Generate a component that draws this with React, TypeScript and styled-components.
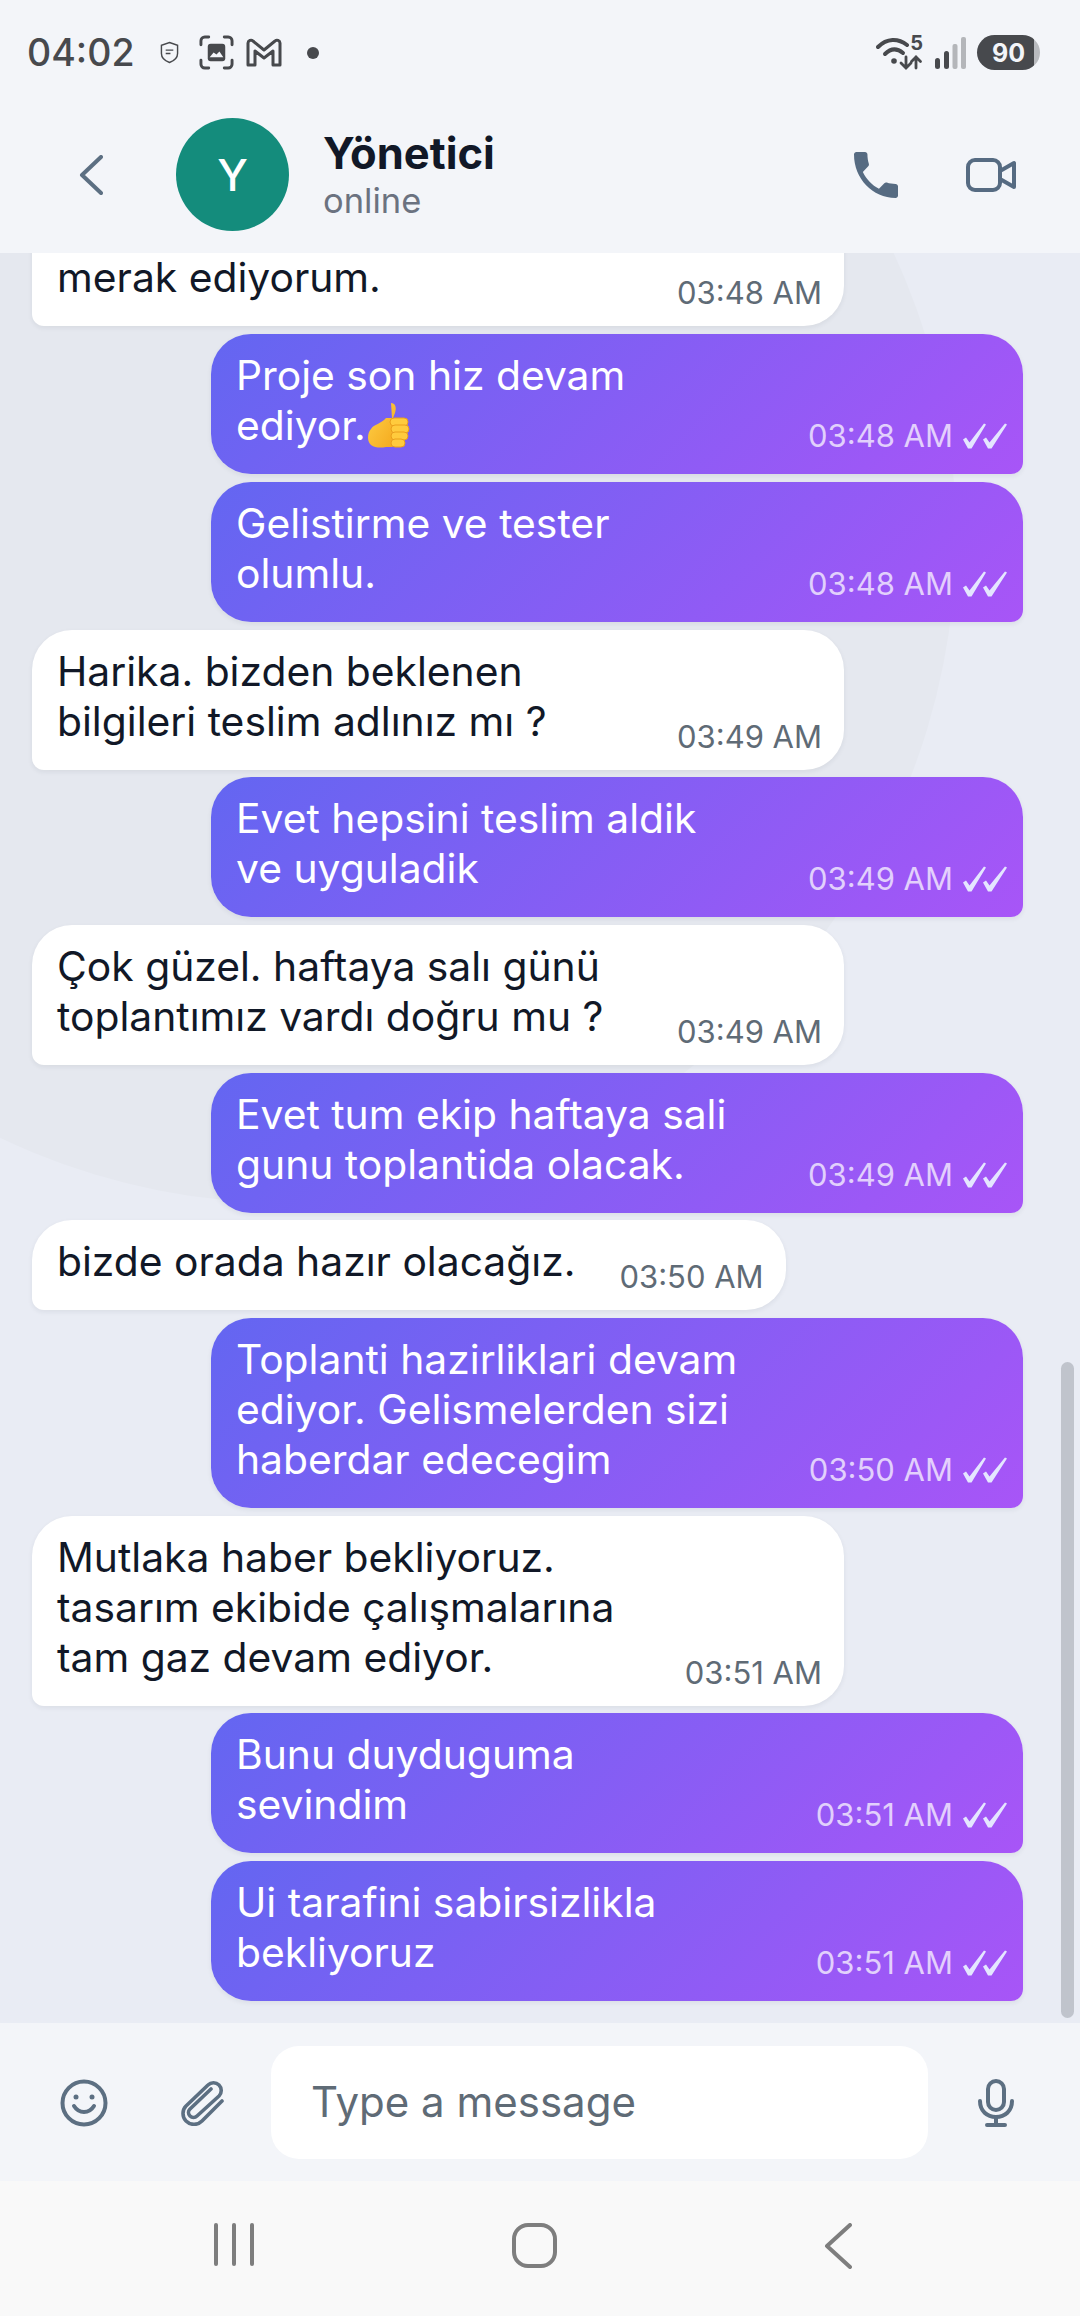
import React from 'react';
import styled, { createGlobalStyle } from 'styled-components';

const GlobalStyle = createGlobalStyle`
    html, body {
        margin: 0;
        padding: 0;
        background: #f3f5f9;
    }
    * {
        box-sizing: border-box;
    }
`;

const Screen = styled.div`
    width: 1080px;
    height: 2316px;
    display: flex;
    flex-direction: column;
    overflow: hidden;
    font-family: Inter, "Noto Sans", sans-serif;
    background: #f3f5f9;
`;

const TopArea = styled.header`
    flex: none;
    height: 253px;
    background: #f3f5f9;
    display: flex;
    flex-direction: column;
`;

const StatusBar = styled.div`
    height: 105px;
    padding: 0 40px 0 27px;
    display: flex;
    align-items: center;
    justify-content: space-between;
    color: #47494d;
`;

const StatusGroup = styled.div`
    display: flex;
    align-items: center;
`;

const Clock = styled.span`
    font-size: 37.5px;
    font-weight: 500;
    margin-right: 25px;
`;

const Header = styled.div`
    flex: 1;
    display: flex;
    align-items: flex-start;
    padding: 13px 64px 0 79px;
`;

const BackButton = styled.div`
    width: 97px;
    height: 113px;
    display: flex;
    align-items: center;
`;

const Avatar = styled.div`
    width: 113px;
    height: 113px;
    border-radius: 50%;
    background: #148c7c;
    color: #fff;
    font-size: 44px;
    font-weight: 500;
    display: flex;
    align-items: center;
    justify-content: center;
`;

const Contact = styled.div`
    flex: 1;
    margin-left: 34px;
    padding-top: 8px;
    display: flex;
    flex-direction: column;
`;

const Name = styled.div`
    font-size: 43.5px;
    font-weight: 700;
    line-height: 54px;
    color: #111827;
`;

const Presence = styled.div`
    font-size: 34.5px;
    line-height: 41px;
    color: #6b7280;
`;

const HeaderActions = styled.div`
    height: 113px;
    display: flex;
    align-items: center;
    gap: 68px;
`;

const Chat = styled.main`
    flex: 1;
    min-height: 0;
    position: relative;
    overflow: hidden;
    background: #e9ecf4;
    display: flex;
    flex-direction: column;
    justify-content: flex-end;
    gap: 7.7px;
    padding: 0 57px 22px 32px;

    &::before {
        content: '';
        position: absolute;
        left: -380px;
        top: -386px;
        width: 1336px;
        height: 1336px;
        border-radius: 50%;
        background: #e5e8ef;
    }
`;

const ScrollThumb = styled.div`
    position: absolute;
    right: 6px;
    bottom: 5px;
    width: 13px;
    height: 656px;
    border-radius: 7px;
    background: #c0c4cc;
`;

const Bubble = styled.div<{ $mine?: boolean; $fit?: boolean }>`
    position: relative;
    flex: none;
    width: ${p => (p.$fit ? 'fit-content' : '812px')};
    align-self: ${p => (p.$mine ? 'flex-end' : 'flex-start')};
    padding: ${p => (p.$mine ? '16px 16px 24px 25px' : '16px 22px 24px 25px')};
    display: flex;
    justify-content: space-between;
    gap: 44px;
    color: ${p => (p.$mine ? '#fff' : '#111827')};
    background: ${p => (p.$mine ? 'linear-gradient(135deg, #6366f1, #a855f7)' : '#fff')};
    border-radius: ${p => (p.$mine ? '40px 40px 12px 40px' : '40px 40px 40px 12px')};
    box-shadow: 0 2px 5px rgba(30, 41, 59, 0.07);
`;

const MessageText = styled.div`
    font-size: 40.8px;
    line-height: 50px;
    white-space: nowrap;
`;

const Meta = styled.div<{ $mine?: boolean }>`
    flex: none;
    align-self: flex-end;
    display: flex;
    align-items: center;
    gap: 10px;
    font-size: 31px;
    line-height: 36px;
    margin-bottom: ${p => (p.$mine ? '-4px' : '-9px')};
    color: ${p => (p.$mine ? 'rgba(255, 255, 255, 0.72)' : '#5f6b76')};
`;

const Composer = styled.div`
    flex: none;
    height: 158px;
    padding: 23px 66px 22px 60px;
    display: flex;
    align-items: center;
    background: #f3f5f9;
    color: #5c6f82;
`;

const ComposerIcons = styled.div`
    width: 211px;
    display: flex;
    align-items: center;
    gap: 73px;
`;

const MessageInput = styled.div`
    width: 657px;
    height: 113px;
    padding: 0 40px 2px;
    border-radius: 28px;
    background: #fff;
    display: flex;
    align-items: center;
    font-size: 42px;
    color: #5f6b76;
`;

const MicSlot = styled.div`
    flex: 1;
    display: flex;
    justify-content: flex-end;
`;

const NavBar = styled.nav`
    flex: none;
    height: 135px;
    background: #f9f9f9;
    display: flex;
    align-items: flex-start;
    padding: 42px 228px 0 214px;
    justify-content: space-between;
`;

const RecentLines = styled.div`
    width: 40px;
    height: 43px;
    display: flex;
    justify-content: space-between;
`;

const RecentLine = styled.span`
    width: 4px;
    height: 100%;
    border-radius: 2px;
    background: #7e7e7e;
`;

const HomeButton = styled.div`
    width: 45px;
    height: 45px;
    margin-right: 9px;
    border: 4px solid #7e7e7e;
    border-radius: 16px;
`;

const BatteryPill = styled.div`
    width: 63px;
    height: 35px;
    margin-left: 11px;
    border-radius: 18px;
    background: linear-gradient(90deg, #47494d 90%, #b9bbbf 90%);
    color: #f3f5f9;
    font-size: 25px;
    font-weight: 700;
    display: flex;
    align-items: center;
    justify-content: center;
`;

const WifiWrap = styled.div`
    position: relative;
    width: 47px;
    height: 34px;
`;

const WifiLevel = styled.span`
    position: absolute;
    right: 0;
    top: -3px;
    font-size: 20px;
    line-height: 20px;
    font-weight: 700;
`;

const ShieldIcon = () => (
    <svg width="19" height="23" viewBox="0 0 20 24" fill="none" stroke="#47494d" strokeWidth="1.5" style={{ marginRight: 20 }}>
        <path d="M10 1.5 18.5 4.5V13C18.5 18 14 21 10 22.5 6 21 1.5 18 1.5 13V4.5Z"/>
        <path d="M6 9.5h8M6 13h5"/>
    </svg>
);

const ScreenshotIcon = () => (
    <svg width="35" height="35" viewBox="0 0 36 36" fill="none" style={{ marginRight: 12 }}>
        <path d="M2 10V6a4 4 0 0 1 4-4h4M26 2h4a4 4 0 0 1 4 4v4M34 26v4a4 4 0 0 1-4 4h-4M10 34H6a4 4 0 0 1-4-4v-4" stroke="#47494d" strokeWidth="3" strokeLinecap="round"/>
        <rect x="9" y="9" width="18" height="18" rx="3" fill="#47494d"/>
        <path d="M11 23l4-5 3 2 3-3 4 6z" fill="#f3f5f9"/>
    </svg>
);

const MailIcon = () => (
    <svg width="36" height="29" viewBox="0 0 36 29" fill="none" stroke="#47494d" strokeWidth="3" strokeLinejoin="round" style={{ marginRight: 25 }}>
        <path d="M2 5a3 3 0 0 1 5-2l11 9 11-9a3 3 0 0 1 5 2v22h-7V13l-9 7-9-7v14H2Z"/>
    </svg>
);

const NoticeDot = () => (
    <svg width="12" height="12" viewBox="0 0 12 12">
        <circle cx="6" cy="6" r="6" fill="#47494d"/>
    </svg>
);

const WifiIcon = () => (
    <svg width="47" height="34" viewBox="0 0 47 34" fill="none" stroke="#47494d" strokeWidth="4" strokeLinecap="round">
        <path d="M2 11C11 2 22 2 31 9"/>
        <path d="M9 18C15 12 21 12 27 17"/>
        <circle cx="18" cy="25" r="2.8" fill="#47494d" stroke="none"/>
        <path d="M30 21v11m-5-5 5 5 5-5" strokeWidth="2.8"/>
        <path d="M40 32V21m-4.500 4.500 4.500-4.500 4.500 4.500" strokeWidth="2.8"/>
    </svg>
);

const SignalIcon = () => (
    <svg width="31" height="32" viewBox="0 0 31 32" style={{ marginLeft: 12 }}>
        <rect x="0" y="21" width="5" height="11" rx="2.5" fill="#47494d"/>
        <rect x="9" y="14" width="5" height="18" rx="2.5" fill="#47494d"/>
        <rect x="17.500" y="7" width="5" height="25" rx="2" fill="#b4b6ba"/>
        <rect x="26" y="0" width="5" height="32" rx="2" fill="#b4b6ba"/>
    </svg>
);

const BackIcon = () => (
    <svg width="24" height="40" viewBox="0 0 24 40" fill="none" stroke="#5c6f82" strokeWidth="4" strokeLinecap="round" strokeLinejoin="round">
        <path d="M22 2 3 20l19 18"/>
    </svg>
);

const PhoneIcon = () => (
    <svg width="44" height="46" viewBox="3 3 18 18" preserveAspectRatio="none" fill="#566b82" style={{ marginLeft: 2 }}>
        <path d="M6.62 10.79c1.44 2.83 3.76 5.14 6.59 6.59l2.2-2.2c.27-.27.67-.36 1.02-.24 1.12.37 2.33.57 3.57.57.55 0 1 .45 1 1V20c0 .55-.45 1-1 1-9.39 0-17-7.61-17-17 0-.55.45-1 1-1h3.5c.55 0 1 .45 1 1 0 1.25.2 2.45.57 3.57.11.35.03.74-.25 1.02l-2.2 2.2z"/>
    </svg>
);

const VideoIcon = () => (
    <svg width="50" height="34" viewBox="0 0 50 34" fill="none" stroke="#566b82" strokeWidth="4" strokeLinejoin="round">
        <rect x="2" y="2" width="32" height="30" rx="7"/>
        <path d="M34 13 48 5v24L34 21Z"/>
    </svg>
);

// tapered like the reference, heavier around the valley of the tick
const CheckIcon = () => (
    <svg width="44" height="26" viewBox="0 0 44 26" fill="#e4e6ff">
        <path d="M0 16.500 3 14.500 6.500 19.500 21 0.500 23 1.500 8.500 25.500H5Z"/>
        <path d="M20 16.500 23 14.500 26.500 19.500 42 0.500 44 1.500 28.500 25.500H25Z"/>
    </svg>
);

const ThumbsUp = () => (
    <svg width="44" height="46" viewBox="0 0 44 46" style={{ verticalAlign: -8 }}>
        <defs>
            <linearGradient id="thumb" x1="0" y1="0" x2="1" y2="1">
                <stop offset="0" stopColor="#ffd24a"/>
                <stop offset="1" stopColor="#f4a81c"/>
            </linearGradient>
        </defs>
        <path d="M25 1c4 0 6 4 4 10l-2 5h-7C15 22 8 22 5 27 1 31 1 40 5 43c4 3 10 3 15 2l6 0V16Z" fill="url(#thumb)"/>
        <g fill="#ffcb3d" stroke="#ea9f1c" strokeWidth="1">
            <rect x="24" y="16" width="18" height="8" rx="4"/>
            <rect x="25" y="23" width="18" height="8" rx="4"/>
            <rect x="25" y="30" width="17" height="8" rx="4"/>
            <rect x="25" y="37" width="14" height="8" rx="4"/>
        </g>
    </svg>
);

const SmileIcon = () => (
    <svg width="48" height="48" viewBox="0 0 48 48" fill="none" stroke="#5c6f82" strokeWidth="4" strokeLinecap="round">
        <circle cx="24" cy="24" r="21.5"/>
        <path d="M14 27c5 8 15 8 20 0"/>
        <circle cx="16" cy="18" r="2.500" fill="#5c6f82" stroke="none"/>
        <circle cx="32" cy="18" r="2.500" fill="#5c6f82" stroke="none"/>
    </svg>
);

const ClipIcon = () => (
    <svg width="44" height="46" viewBox="0 0 44 46" fill="none" stroke="#5c6f82" strokeWidth="3.6" strokeLinecap="round" strokeLinejoin="round">
        <path d="M41 21 21 41c-5 5-12 4-16 0-4-4-4-11 0-15L27 5c3-3 8-3 11 0s3 8 0 11L16 36c-2 2-5 2-7 0s-2-5 0-7l21-20"/>
    </svg>
);

const MicIcon = () => (
    <svg width="36" height="48" viewBox="0 0 36 48" fill="none" stroke="#5c6f82" strokeWidth="4" strokeLinecap="round">
        <rect x="10" y="2" width="16" height="29" rx="8"/>
        <path d="M2 22c0 10 7 16 16 16s16-6 16-16"/>
        <path d="M18 38v7M9 46h18"/>
    </svg>
);

const NavBackIcon = () => (
    <svg width="28" height="46" viewBox="0 0 28 46" fill="none" stroke="#7e7e7e" strokeWidth="4" strokeLinecap="round" strokeLinejoin="round">
        <path d="M26 2 3 23l23 21"/>
    </svg>
);

type Message = {
    lines: string[];
    time: string;
    mine?: boolean;
    fit?: boolean;
    thumb?: boolean;
};

const messages: Message[] = [
    { lines: ['\u00a0', 'merak ediyorum.'], time: '03:48 AM' },
    { lines: ['Proje son hiz devam', 'ediyor.'], time: '03:48 AM', mine: true, thumb: true },
    { lines: ['Gelistirme ve tester', 'olumlu.'], time: '03:48 AM', mine: true },
    { lines: ['Harika. bizden beklenen', 'bilgileri teslim adlınız mı ?'], time: '03:49 AM' },
    { lines: ['Evet hepsini teslim aldik', 've uyguladik'], time: '03:49 AM', mine: true },
    { lines: ['Çok güzel. haftaya salı günü', 'toplantımız vardı doğru mu ?'], time: '03:49 AM' },
    { lines: ['Evet tum ekip haftaya sali', 'gunu toplantida olacak.'], time: '03:49 AM', mine: true },
    { lines: ['bizde orada hazır olacağız.'], time: '03:50 AM', fit: true },
    { lines: ['Toplanti hazirliklari devam', 'ediyor. Gelismelerden sizi', 'haberdar edecegim'], time: '03:50 AM', mine: true },
    { lines: ['Mutlaka haber bekliyoruz.', 'tasarım ekibide çalışmalarına', 'tam gaz devam ediyor.'], time: '03:51 AM' },
    { lines: ['Bunu duyduguma', 'sevindim'], time: '03:51 AM', mine: true },
    { lines: ['Ui tarafini sabirsizlikla', 'bekliyoruz'], time: '03:51 AM', mine: true },
];

export default function App() {
    return (
        <Screen>
            <GlobalStyle/>
            <TopArea>
                <StatusBar>
                    <StatusGroup>
                        <Clock>04:02</Clock>
                        <ShieldIcon/>
                        <ScreenshotIcon/>
                        <MailIcon/>
                        <NoticeDot/>
                    </StatusGroup>
                    <StatusGroup>
                        <WifiWrap>
                            <WifiIcon/>
                            <WifiLevel>5</WifiLevel>
                        </WifiWrap>
                        <SignalIcon/>
                        <BatteryPill>90</BatteryPill>
                    </StatusGroup>
                </StatusBar>
                <Header>
                    <BackButton><BackIcon/></BackButton>
                    <Avatar>Y</Avatar>
                    <Contact>
                        <Name>Yönetici</Name>
                        <Presence>online</Presence>
                    </Contact>
                    <HeaderActions>
                        <PhoneIcon/>
                        <VideoIcon/>
                    </HeaderActions>
                </Header>
            </TopArea>
            <Chat>
                {messages.map((m, i) => (
                    <Bubble key={i} $mine={m.mine} $fit={m.fit}>
                        <MessageText>
                            {m.lines.map((line, j) => (
                                <div key={j}>
                                    {line}
                                    {m.thumb && j === m.lines.length - 1 && <ThumbsUp/>}
                                </div>
                            ))}
                        </MessageText>
                        <Meta $mine={m.mine}>
                            {m.time}
                            {m.mine && <CheckIcon/>}
                        </Meta>
                    </Bubble>
                ))}
                <ScrollThumb/>
            </Chat>
            <Composer>
                <ComposerIcons>
                    <SmileIcon/>
                    <ClipIcon/>
                </ComposerIcons>
                <MessageInput>Type a message</MessageInput>
                <MicSlot><MicIcon/></MicSlot>
            </Composer>
            <NavBar>
                <RecentLines>
                    <RecentLine/>
                    <RecentLine/>
                    <RecentLine/>
                </RecentLines>
                <HomeButton/>
                <NavBackIcon/>
            </NavBar>
        </Screen>
    );
}
